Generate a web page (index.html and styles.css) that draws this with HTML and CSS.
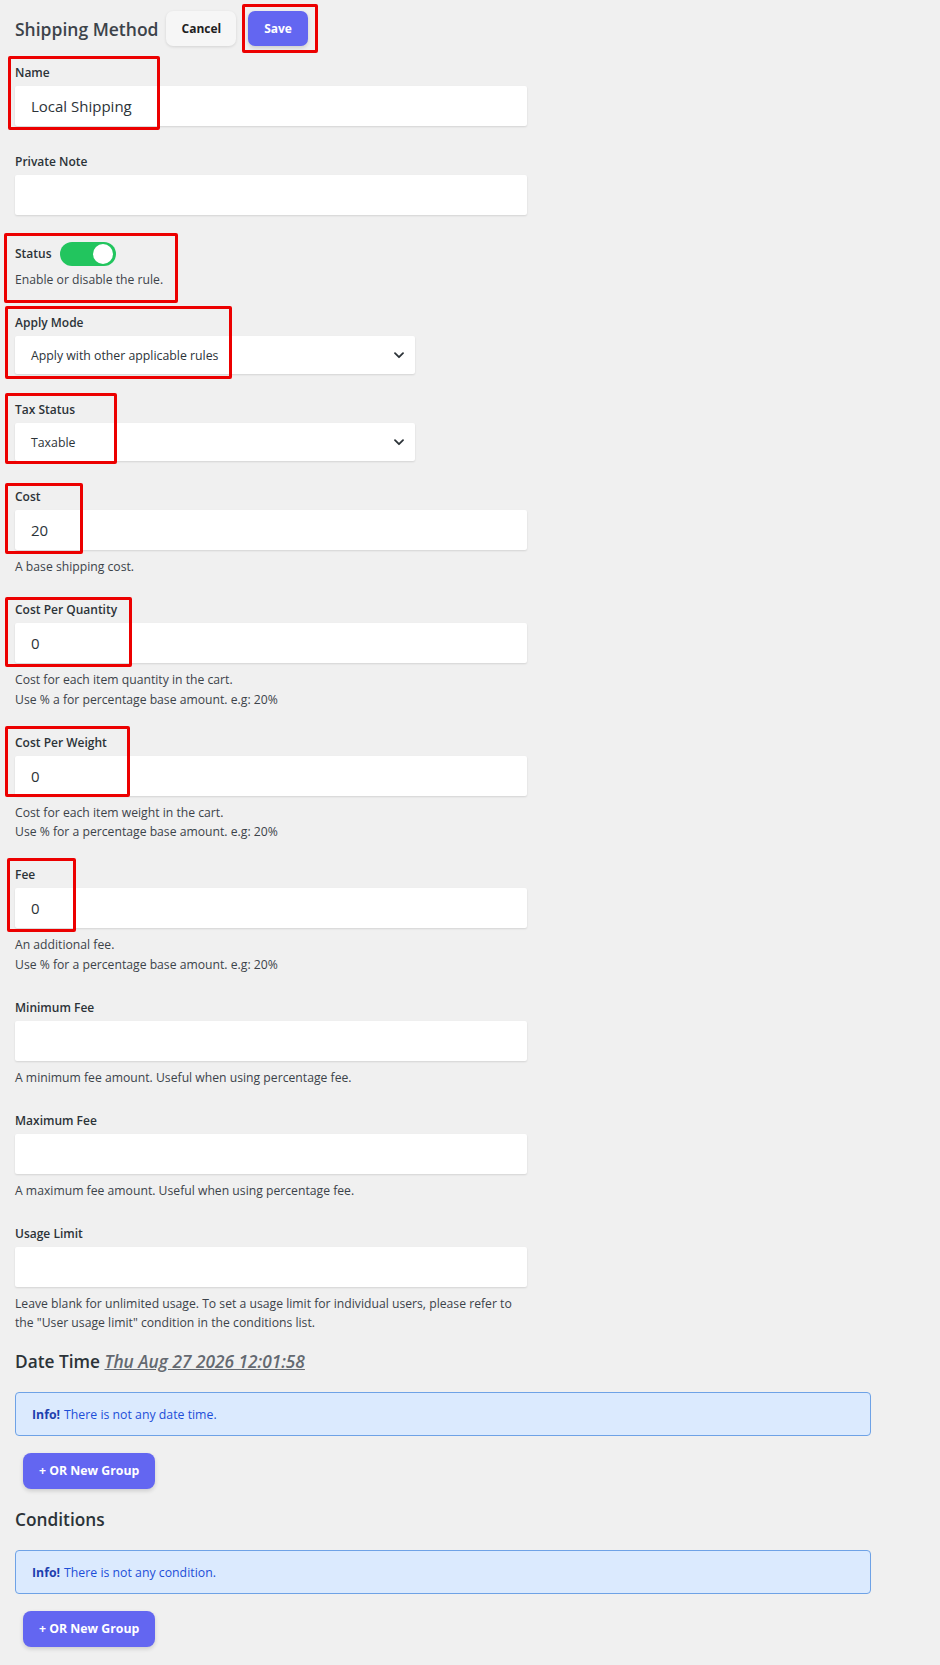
FILE: index.html
```html
<!DOCTYPE html>
<html lang="en">
<head>
<meta charset="utf-8">
<title>Shipping Method</title>
<link rel="stylesheet" href="styles.css">
</head>
<body>
<div class="page">
  <div class="topbar">
    <h1 class="title">Shipping Method</h1>
    <button class="btn btn-light" type="button">Cancel</button>
    <button class="btn btn-primary" type="button">Save</button>
  </div>

  <div class="field">
    <label class="label">Name</label>
    <input class="input" type="text" value="Local Shipping">
  </div>

  <div class="field">
    <label class="label">Private Note</label>
    <input class="input" type="text" value="">
  </div>

  <div class="field field-desc">
    <div class="status-row">
      <span class="label label-inline">Status</span>
      <span class="toggle"><span class="knob"></span></span>
    </div>
    <p class="desc desc-status">Enable or disable the rule.</p>
  </div>

  <div class="field">
    <label class="label">Apply Mode</label>
    <div class="select">
      <span>Apply with other applicable rules</span>
      <svg class="chevron" width="10" height="7" viewBox="0 0 10 7"><polyline points="1,1.2 5,5.2 9,1.2" fill="none" stroke="#2c3338" stroke-width="1.8" stroke-linecap="round" stroke-linejoin="round"/></svg>
    </div>
  </div>

  <div class="field">
    <label class="label">Tax Status</label>
    <div class="select">
      <span>Taxable</span>
      <svg class="chevron" width="10" height="7" viewBox="0 0 10 7"><polyline points="1,1.2 5,5.2 9,1.2" fill="none" stroke="#2c3338" stroke-width="1.8" stroke-linecap="round" stroke-linejoin="round"/></svg>
    </div>
  </div>

  <div class="field field-desc">
    <label class="label">Cost</label>
    <input class="input" type="text" value="20">
    <p class="desc">A base shipping cost.</p>
  </div>

  <div class="field field-desc">
    <label class="label">Cost Per Quantity</label>
    <input class="input" type="text" value="0">
    <p class="desc">Cost for each item quantity in the cart.<br>Use % a for percentage base amount. e.g: 20%</p>
  </div>

  <div class="field field-desc">
    <label class="label">Cost Per Weight</label>
    <input class="input" type="text" value="0">
    <p class="desc">Cost for each item weight in the cart.<br>Use % for a percentage base amount. e.g: 20%</p>
  </div>

  <div class="field field-desc">
    <label class="label">Fee</label>
    <input class="input" type="text" value="0">
    <p class="desc">An additional fee.<br>Use % for a percentage base amount. e.g: 20%</p>
  </div>

  <div class="field field-desc">
    <label class="label">Minimum Fee</label>
    <input class="input" type="text" value="">
    <p class="desc">A minimum fee amount. Useful when using percentage fee.</p>
  </div>

  <div class="field field-desc">
    <label class="label">Maximum Fee</label>
    <input class="input" type="text" value="">
    <p class="desc">A maximum fee amount. Useful when using percentage fee.</p>
  </div>

  <div class="field field-last">
    <label class="label">Usage Limit</label>
    <input class="input" type="text" value="">
    <p class="desc">Leave blank for unlimited usage. To set a usage limit for individual users, please refer to<br>the "User usage limit" condition in the conditions list.</p>
  </div>

  <section class="section">
    <h2 class="section-title">Date Time <span class="date">Thu Aug 27 2026 12:01:58</span></h2>
    <div class="alert"><strong>Info!</strong> There is not any date time.</div>
    <button class="btn btn-primary btn-group" type="button">+ OR New Group</button>
  </section>

  <section class="section">
    <h2 class="section-title">Conditions</h2>
    <div class="alert"><strong>Info!</strong> There is not any condition.</div>
    <button class="btn btn-primary btn-group" type="button">+ OR New Group</button>
  </section>

  <div class="mark mark-save"></div>
  <div class="mark mark-name"></div>
  <div class="mark mark-status"></div>
  <div class="mark mark-apply"></div>
  <div class="mark mark-tax"></div>
  <div class="mark mark-cost"></div>
  <div class="mark mark-cpq"></div>
  <div class="mark mark-cpw"></div>
  <div class="mark mark-fee"></div>
</div>
</body>
</html>
```

FILE: styles.css
```css
* { box-sizing: border-box; }

html, body {
  margin: 0;
  padding: 0;
  background: #f0f0f0;
}

body {
  font-family: "Open Sans", "Noto Sans", sans-serif;
  color: #3c434a;
}

.page {
  position: relative;
  padding: 0 15px 20px 15px;
  min-height: 1665px;
}

/* top bar */
.topbar {
  display: flex;
  align-items: center;
  padding-top: 11px;
  height: 46px;
}

.title {
  margin: 0 8px 0 0;
  font-size: 17.5px;
  font-weight: 600;
  color: #3c434a;
  line-height: 24px;
}

.btn {
  font-family: inherit;
  border: 0;
  border-radius: 7px;
  height: 35px;
  cursor: pointer;
  font-weight: 700;
  font-size: 12px;
}

.btn-light {
  background: #f6f6f6;
  color: #1f1f1f;
  padding: 0 15px;
  box-shadow: 0 1px 3px rgba(0, 0, 0, 0.12);
  margin-right: 12px;
}

.btn-primary {
  background: #6366f1;
  color: #ffffff;
  padding: 0 16px;
  box-shadow: 0 2px 4px rgba(0, 0, 0, 0.15);
}

/* fields */
.field {
  margin-top: 0;
  margin-bottom: 27px;
}

.topbar + .field { margin-top: 18px; }

.field-desc { margin-bottom: 24.5px; }
.field-last { margin-bottom: 17px; }

.label {
  display: block;
  font-size: 12px;
  font-weight: 600;
  line-height: 18px;
  margin-bottom: 4px;
  color: #2c3338;
}

.label-inline {
  display: inline-block;
  margin: 0;
}

.input {
  display: block;
  width: 512px;
  height: 40px;
  border: 0;
  border-radius: 2px;
  background: #ffffff;
  box-shadow: 0 1px 2px rgba(0, 0, 0, 0.12);
  padding: 0 16px;
  font-family: inherit;
  font-size: 15px;
  color: #2c3338;
  outline: none;
}

.select {
  display: flex;
  align-items: center;
  justify-content: space-between;
  width: 400px;
  height: 38px;
  background: #ffffff;
  border-radius: 2px;
  box-shadow: 0 1px 2px rgba(0, 0, 0, 0.12);
  padding: 0 11px 0 16px;
  font-size: 12.3px;
  color: #2c3338;
}

.chevron { display: block; }

.desc {
  margin: 7px 0 0 0;
  font-size: 12.2px;
  line-height: 19.5px;
  color: #3c434a;
}

.desc-status { margin-top: 4px; }

/* status toggle */
.status-row {
  display: flex;
  align-items: center;
  height: 24px;
  gap: 8px;
}

.toggle {
  position: relative;
  display: inline-block;
  width: 56px;
  height: 24px;
  border-radius: 12px;
  background: #22c55e;
}

.knob {
  position: absolute;
  top: 2px;
  right: 3px;
  width: 20px;
  height: 20px;
  border-radius: 50%;
  background: #ffffff;
}

/* sections */
.section {
  margin-bottom: 19px;
}

.section-title {
  margin: 0 0 18.5px 0;
  font-size: 17.3px;
  font-weight: 600;
  line-height: 24px;
  color: #2c3338;
}

.date {
  font-style: italic;
  text-decoration: underline;
  color: #646970;
}

.alert {
  width: 856px;
  height: 44px;
  padding: 0 16px;
  display: flex;
  align-items: center;
  background: #dbeafe;
  border: 1px solid #6ea2e6;
  border-radius: 4px;
  font-size: 12.3px;
  color: #1d4ed8;
}

.alert strong {
  font-weight: 700;
  color: #1e40af;
  margin-right: 4px;
}

.btn-group {
  display: block;
  margin: 16.5px 0 0 8px;
  height: 36px;
  padding: 0 16px;
  font-size: 12.3px;
  border-radius: 8px;
}

/* annotation boxes */
.mark {
  position: absolute;
  border: 3px solid #ec0000;
  border-radius: 2px;
  pointer-events: none;
}

.mark-save   { left: 242px; top: 4px;   width: 76px;  height: 49px; }
.mark-name   { left: 8px;   top: 56px;  width: 152px; height: 74px; }
.mark-status { left: 4px;   top: 233px; width: 174px; height: 70px; }
.mark-apply  { left: 5px;   top: 306px; width: 227px; height: 73px; }
.mark-tax    { left: 5px;   top: 393px; width: 112px; height: 71px; }
.mark-cost   { left: 5px;   top: 483px; width: 78px;  height: 71px; }
.mark-cpq    { left: 5px;   top: 597px; width: 127px; height: 70px; }
.mark-cpw    { left: 5px;   top: 726px; width: 125px; height: 71px; }
.mark-fee    { left: 7px;   top: 858px; width: 69px;  height: 74px; }
```
